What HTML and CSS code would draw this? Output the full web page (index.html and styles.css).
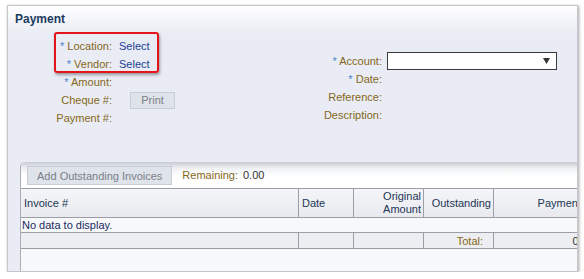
FILE: index.html
```html
<!DOCTYPE html>
<html lang="en">
<head>
    <meta charset="UTF-8">
    <title>Payment</title>
    <link rel="stylesheet" href="styles.css">
</head>
<body>

<div class="frame">
    <h2 class="title">Payment</h2>

    <div class="form">
        <div class="form-col left">
            <label><span class="req">*</span> Location:</label>
            <a href="#" class="link">Select</a>
            <label><span class="req">*</span> Vendor:</label>
            <a href="#" class="link">Select</a>
            <label><span class="req">*</span> Amount:</label>
            <span></span>
            <label>Cheque #:</label>
            <span><button class="btn print" disabled>Print</button></span>
            <label>Payment #:</label>
            <span></span>
        </div>

        <div class="form-col right">
            <label><span class="req">*</span> Account:</label>
            <div class="choice">
                <svg width="7" height="6" viewBox="0 0 7 6"><path d="M0 0H7L3.5 6Z" fill="#333"/></svg>
            </div>
            <label><span class="req">*</span> Date:</label>
            <span></span>
            <label>Reference:</label>
            <span></span>
            <label>Description:</label>
            <span></span>
        </div>
    </div>

    <div class="panel">
        <div class="toolbar">
            <button class="btn wide" disabled>Add Outstanding Invoices</button>
            <span class="lbl">Remaining:</span>
            <span class="amount">0.00</span>
        </div>

        <div class="grid">
            <div class="th">Invoice #</div>
            <div class="th">Date</div>
            <div class="th num">Original<br>Amount</div>
            <div class="th num">Outstanding</div>
            <div class="th num pay">Payment</div>

            <div class="empty">No data to display.</div>

            <div class="tf"></div>
            <div class="tf"></div>
            <div class="tf"></div>
            <div class="tf num lbl total">Total:</div>
            <div class="tf num">0.00</div>
        </div>
    </div>

    <div class="callout"></div>
</div>

</body>
</html>
```

FILE: styles.css
```css
body {
    margin: 0;
    background-color: #fff;
    font-family: "Liberation Sans", Arial, sans-serif;
    font-size: 11px;
    color: #333;
}
.frame {
    position: relative;
    margin: 5px 0 0 7px;
    width: 571px;
    height: 267px;
    box-sizing: border-box;
    border: 1px solid #c3c6cc;
    box-shadow: 1px 1px 3px rgba(0, 0, 0, 0.35);
    background: linear-gradient(#fff 0, #e9ecf4 28px);
    overflow: hidden;
}
.title {
    margin: 0;
    padding: 6px 0 0 7px;
    font-size: 12px;
    line-height: 14px;
    font-weight: bold;
    color: #1b3a5e;
}
.form {
    display: flex;
    margin-top: 11px;
}
.form-col {
    display: grid;
    grid-auto-rows: 18px;
    align-items: center;
}
.form-col label {
    text-align: right;
    color: #85671a;
    white-space: nowrap;
}
.left {
    grid-template-columns: 104px 163px;
    column-gap: 7px;
    width: 274px;
}
.right {
    grid-template-columns: 100px 170px;
    column-gap: 5px;
    margin-top: 15px;
}
.req {
    color: #4f84c9;
}
.link {
    color: #233e95;
    text-decoration: none;
}
.btn {
    font-family: inherit;
    font-size: 11px;
    color: #7a8089;
    background-color: #dfe3ea;
    border: 1px solid #c8cdd5;
    padding: 0;
    margin: 0;
}
.print {
    display: block;
    width: 45px;
    height: 17px;
    margin-left: 11px;
}
.choice {
    height: 18px;
    box-sizing: border-box;
    border: 1px solid #383a3e;
    background-color: #fff;
    display: flex;
    align-items: center;
    justify-content: flex-end;
    padding-right: 6px;
}
.panel {
    margin: 35px 0 0 12px;
    width: 640px;
    height: 110px;
    border-left: 1px solid #a9adb4;
    border-top-left-radius: 5px;
    background-color: #f7f8fa;
}
.toolbar {
    height: 26px;
    box-sizing: border-box;
    padding: 4px 0 0 6px;
    display: flex;
    align-items: flex-start;
    background: linear-gradient(#c6cad2 0, #eef0f3 6px, #fff 14px);
    border-top-left-radius: 5px;
}
.wide {
    height: 19px;
    padding: 0 9px;
}
.toolbar .lbl {
    margin-left: 10px;
    line-height: 19px;
}
.lbl {
    color: #85671a;
}
.amount {
    margin-left: 5px;
    line-height: 19px;
    color: #333;
}
.grid {
    display: grid;
    grid-template-columns: 278px 55px 70px 70px 107px;
    grid-template-rows: 29px 15px 16px;
    border-top: 1px solid #9b9ea5;
}
.th {
    display: flex;
    align-items: center;
    padding: 0 3px;
    line-height: 13px;
    color: #1d3655;
    background: linear-gradient(#f4f5f8, #e8eaef);
    border-right: 1px solid #9b9ea5;
    border-bottom: 1px solid #9b9ea5;
}
.num {
    justify-content: flex-end;
    text-align: right;
}
.th.num {
    padding-right: 2px;
}
.th.pay {
    padding-right: 19px;
}
.empty {
    grid-column: 1 / -1;
    padding-left: 1px;
    line-height: 14px;
    color: #1a2a62;
    background-color: #f7f8fa;
    border-bottom: 1px solid #9b9ea5;
}
.tf {
    display: flex;
    align-items: center;
    background-color: #eceef2;
    border-right: 1px solid #9b9ea5;
    border-bottom: 1px solid #9b9ea5;
    padding-right: 6px;
}
.tf.total {
    padding-right: 10px;
}
.callout {
    position: absolute;
    left: 46px;
    top: 26px;
    width: 105px;
    height: 41px;
    box-sizing: border-box;
    border: 2px solid #e3151a;
    border-radius: 3px;
    box-shadow: 1px 2px 3px rgba(0, 0, 0, 0.35);
}
```
